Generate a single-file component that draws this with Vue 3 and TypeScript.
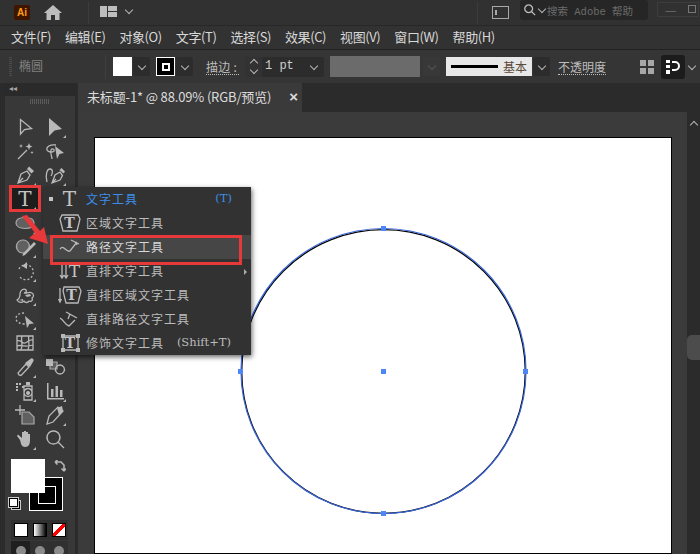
<script setup lang="ts">
type Tool = { f?: string; s?: string; d?: string; t?: string; dash?: boolean; corner?: boolean };

const menus = ["文件(F)", "编辑(E)", "对象(O)", "文字(T)", "选择(S)", "效果(C)", "视图(V)", "窗口(W)", "帮助(H)"];

// 工具列：两栏，文字工具右边那几格被弹出菜单盖住
const tools: Tool[] = [
  { s: "M6.500 3.500V18L10.500 13.500L17.500 12.500Z" },
  { f: "M5 2V20L10.500 14.500L18 13Z", corner: true },
  { s: "M4 19L13 10", f: "M15 3l1 2.500 2.500 1-2.500 1-1 2.500-1-2.500-2.500-1 2.500-1zM7 4l.6 1.400L9 6l-1.400.6L7 8l-.6-1.400L5 6l1.400-.6zM18 11l.5 1 1 .5-1 .5-.5 1-.5-1-1-.5 1-.5z" },
  { s: "M12 5C6 4 2 7 3 10C4 12 8 13 10 11C11 9 8 8 7 10C6 13 8 17 8 19", f: "M11 6L20 13L15.500 14L13 19Z" },
  { s: "M4 19L7 10L13 7L16 11L13 16ZM4 19L9 14", f: "M13 5L15 2.500L20 7L17.500 9.500Z", corner: true },
  { s: "M3 18C1 11 3 5 6 5C9 5 9 9 7 12M8 19L11 11L16 8L18.500 11.500L16 16ZM8 19L12 15", f: "M15.500 6L17.500 4L21 7.500L19.500 9.500Z", corner: true },
  { t: "T", corner: true },
  {},
  { d: "M11 5.500C17 5.500 20 8 20 11C20 14 17 16.500 11 16.500C5 16.500 2 14 2 11C2 8 5 5.500 11 5.500Z", corner: true },
  {},
  { d: "M9 4a6.500 6.500 0 1 1-.1 0z", f: "M20 6L22 8L11 19L8.500 20L9 17.500Z", corner: true },
  {},
  { s: "M5 9A7.500 7.500 0 1 1 6 17", dash: true, f: "M13 2L8 6L13 9Z", corner: true },
  {},
  { s: "M3 16C5 15 6 13 6 10C6 6 10 4 12 6C13 7 12 9 10 9C12 10 15 7 18 9C20 10 20 13 18 14C19 16 18 18 15 17C14 19 11 19 10 17C8 19 5 19 3 16Z", f: "M5 16l4-1 0 2zM11 11l5-1 1 2-4 1z", corner: true },
  {},
  { s: "M10 5C5 5 2 7.500 2 10.500C2 14 6 16 11 16", dash: true, f: "M11 8L20 15.500L15.500 16L13 20Z", corner: true },
  {},
  { s: "M3 4H19V18H3ZM3 9C7 7 8 12 11 11C14 10 15 7 19 8M8 4C6 8 10 12 7 18M15 4C13 8 17 12 14 18M3 14C7 12 10 16 19 13" },
  {},
  { s: "M5 19L4 17L12 8L15 11L7 19.500Z", f: "M11 7L17 2.500C18 1.500 20.500 3.500 19.500 5L16 11Z", corner: true },
  { f: "M2 3H9V10H2Z", d: "M6 6H13V13H6Z", s: "M16 9a4.500 4.500 0 1 1-.1 0z" },
  { f: "M2 3h2v2H2zM5 3h2v2H5zM2 6h2v2H2zM8 6h2v2H8zM2 9h2v2H2zM12 2h4v3h-4zM14 11a2 2 0 1 0 .1 0z", s: "M10 6H18V20H10ZM14 8.500A4 4 0 1 0 14.100 8.500", corner: true },
  { f: "M3 3H4.500V19H3ZM3 18H20V19.500H3ZM7 9H9.500V17H7ZM11.500 6H14V17H11.500ZM16 10H18.500V17H16Z", corner: true },
  { s: "M6 1V11M1 6H11", d: "M8 8H15L20 13V20H8Z" },
  { s: "M3 20L5 12L14 3L19 7L9 18Z", f: "M13 4L18 2L19 7L15 11Z", corner: true },
  { f: "M6 12L3 8L4 6.500L8 10V4H10V9V3H12V9V4H14V10V6H16V12C16 16 15 19 11 19C7 19 7 15 6 12Z", corner: true },
  { s: "M9.500 3A6.500 6.500 0 1 1 9.400 3ZM14 14L20 20" },
];

type MenuRow = { label: string; key?: string; active?: boolean; hover?: boolean; more?: boolean };
const rows: MenuRow[] = [
  { label: "文字工具", key: "(T)", active: true },
  { label: "区域文字工具" },
  { label: "路径文字工具", hover: true },
  { label: "直排文字工具", more: true },
  { label: "直排区域文字工具" },
  { label: "直排路径文字工具" },
  { label: "修饰文字工具", key: "(Shift+T)" },
];
</script>

<template>
  <div class="ai">
    <header class="title">
      <span class="logo">Ai</span>
      <svg class="home" viewBox="0 0 18 15"><path d="M9 0L18 8H15.500V15H11V10H7V15H2.500V8H0Z" /></svg>
      <i class="sep sep-a"></i>
      <svg class="layout" viewBox="0 0 17 11"><path d="M0 0H7V11H0ZM8 0H17V5H8ZM8 6H17V11H8Z" /></svg>
      <i class="chev chev-t"></i>
      <i class="sep sep-b"></i>
      <span class="panel-ico"><b></b></span>
      <div class="search">
        <svg viewBox="0 0 14 14"><path d="M5.500 1A4.500 4.500 0 1 1 5.400 1ZM9 9L13 13" /></svg>
        <i class="chev"></i>
        <span>搜索 Adobe 帮助</span>
      </div>
      <div class="win"><span>—</span><span class="max"></span></div>
    </header>

    <nav class="menubar">
      <span v-for="m in menus" :key="m">{{ m }}</span>
    </nav>

    <section class="control">
      <i class="grip"></i>
      <span class="kind">椭圆</span>
      <i class="ctl-sep"></i>
      <span class="swatch-w"></span>
      <span class="drop"><i class="chev"></i></span>
      <span class="swatch-s"><b></b></span>
      <span class="drop"><i class="chev"></i></span>
      <span class="link stroke-l">描边 :</span>
      <div class="weight">
        <span class="stepper"><i class="chev up"></i><i class="chev"></i></span>
        <span class="val">1 pt</span>
        <span class="drop"><i class="chev"></i></span>
      </div>
      <span class="bar"></span>
      <span class="drop off"><i class="chev"></i></span>
      <div class="profile"><i></i><span>基本</span></div>
      <span class="drop"><i class="chev"></i></span>
      <span class="link opacity">不透明度</span>
      <svg class="arrange" viewBox="0 0 14 14"><path d="M0 0H6V6H0ZM8 0H14V6H8ZM0 8H6V14H0ZM8 8H14V14H8Z" /></svg>
      <span class="snap">
        <svg viewBox="0 0 14 14"><path d="M0 0H4V3H0ZM0 5H4V8H0ZM0 10H4V14H0Z" fill="#fff" /><path d="M6 2H9A3.500 3.500 0 0 1 9 10H6" fill="none" stroke="#fff" stroke-width="2" /></svg>
      </span>
      <i class="chev last"></i>
    </section>

    <div class="body">
      <aside class="tools">
        <div class="tools-head"><span>◂◂</span></div>
        <div class="tools-grip"></div>
        <div class="tool-grid">
          <div v-for="(tool, i) in tools" :key="i" class="tool" :class="{ picked: i === 6 }">
            <svg viewBox="0 0 22 22">
              <path v-if="tool.d" :d="tool.d" class="ico-d" />
              <path v-if="tool.f" :d="tool.f" class="ico-f" />
              <path v-if="tool.s" :d="tool.s" class="ico-s" :stroke-dasharray="tool.dash ? '2 2' : undefined" />
              <text v-if="tool.t" x="11" y="18" class="ico-t">{{ tool.t }}</text>
              <path v-if="tool.corner" d="M22 19V22H19Z" class="ico-f" />
            </svg>
          </div>
        </div>
        <div class="colors">
          <span class="stroke-big"><b></b></span>
          <span class="fill-big"></span>
          <svg class="swap" viewBox="0 0 12 12"><path d="M1 2H7L10 5V11M1 2L3.500 0M1 2L3.500 4.500M10 11L7.500 8.500M10 11L12 8.500" /></svg>
          <span class="def"><b></b></span>
        </div>
        <div class="modes">
          <span class="mode"><i class="m-fill"></i></span>
          <span class="mode"><i class="m-grad"></i></span>
          <span class="mode"><i class="m-none"></i></span>
        </div>
        <div class="draws">
          <span class="draw on"><i></i></span>
          <span class="draw"><i></i></span>
          <span class="draw"><i></i></span>
        </div>
      </aside>

      <main class="doc">
        <div class="tabs">
          <div class="tab">
            <span>未标题-1* @ 88.09% (RGB/预览)</span>
            <em>×</em>
          </div>
        </div>
        <div class="work">
          <div class="canvas">
            <div class="artboard">
              <svg class="shape" viewBox="0 0 576 415">
                <circle cx="288.500" cy="233.500" r="141.800" fill="none" stroke="#000" stroke-width="1.300" />
                <circle cx="288.500" cy="233" r="142.500" fill="none" stroke="#3a66d8" stroke-width="1.200" />
                <rect x="286" y="88" width="5" height="5" fill="#4f86f7" />
                <rect x="143" y="231" width="5" height="5" fill="#4f86f7" />
                <rect x="286" y="231" width="5" height="5" fill="#4f86f7" />
                <rect x="428" y="231" width="5" height="5" fill="#4f86f7" />
                <rect x="286" y="373" width="5" height="5" fill="#4f86f7" />
              </svg>
            </div>
          </div>
          <div class="scroll">
            <i class="chev up"></i>
            <span class="thumb"></span>
          </div>
        </div>
      </main>
    </div>

    <!-- 弹出的文字工具菜单 -->
    <div class="flyout">
      <div v-for="(r, i) in rows" :key="r.label" class="row" :class="{ hover: r.hover, active: r.active }">
        <i class="dot" :class="{ show: r.active }"></i>
        <svg class="row-ico" viewBox="0 0 24 20">
          <template v-if="i === 0"><text x="12" y="17" class="ico-t">T</text></template>
          <template v-else-if="i === 1">
            <path d="M4 2H20L22 6L19 18H5L2 6Z" class="ico-s" />
            <text x="12" y="15" class="ico-t small">T</text>
          </template>
          <template v-else-if="i === 2">
            <path d="M2 12C6 7 8 16 12 14L19 5M13 3L21 7M17 5L19 8" class="ico-s" />
          </template>
          <template v-else-if="i === 3">
            <path d="M4 3V17M2 14L4 17L6 14M8 3V17M6 14L8 17L10 14" class="ico-s" />
            <text x="17" y="16" class="ico-t med">T</text>
          </template>
          <template v-else-if="i === 4">
            <path d="M2 3V17M0.500 14L2 17L3.500 14" class="ico-s" />
            <path d="M6 2H21L23 6L20 18H8L5 6Z" class="ico-s" />
            <text x="14" y="15" class="ico-t small">T</text>
          </template>
          <template v-else-if="i === 5">
            <path d="M2 9C6 11 7 16 11 17L17 11M8 3L19 9M12 5L10 10" class="ico-s" />
          </template>
          <template v-else>
            <path d="M5 3H20V17H5Z" class="ico-s" />
            <path d="M3 1h4v4H3zM18 1h4v4h-4zM3 15h4v4H3zM18 15h4v4h-4z" class="ico-f" />
            <text x="12.500" y="14.500" class="ico-t small">T</text>
          </template>
        </svg>
        <span class="row-label">{{ r.label }}</span>
        <span v-if="r.key" class="row-key">{{ r.key }}</span>
        <i v-if="r.more" class="more"></i>
      </div>
    </div>

    <!-- 教程标注 -->
    <span class="mark mark-tool"></span>
    <span class="mark mark-row"></span>
    <svg class="mark-arrow" viewBox="0 0 30 34"><path d="M1 2L6 1L19 17L23 13L27 30L8 24L14 19Z" /></svg>
  </div>
</template>

<style scoped>
.ai {
  position: relative;
  width: 700px;
  height: 554px;
  overflow: hidden;
  display: flex;
  flex-direction: column;
  background: #323232;
  color: #d6d6d6;
  font-family: "Noto Sans CJK SC", "Liberation Sans", sans-serif;
  font-size: 13px;
}
.chev {
  display: inline-block;
  width: 5px;
  height: 5px;
  border-right: 1.500px solid #b4b4b4;
  border-bottom: 1.500px solid #b4b4b4;
  transform: translateY(-1px) rotate(45deg);
}
.chev.up {
  transform: translateY(1px) rotate(225deg);
}

.title {
  height: 26px;
  flex: none;
  display: flex;
  align-items: center;
  border-bottom: 1px solid #272727;
  box-sizing: border-box;
  background: #313131;
}
.logo {
  width: 16px;
  height: 15px;
  margin-left: 14px;
  background: #3e1600;
  border-radius: 2px;
  color: #ff9c1a;
  font: bold 10px/15px "Liberation Sans", sans-serif;
  text-align: center;
}
.home {
  width: 18px;
  height: 15px;
  margin-left: 14px;
  fill: #bdbdbd;
}
.sep {
  width: 1px;
  height: 22px;
  background: #3c3c3c;
}
.sep-a {
  margin-left: 26px;
}
.layout {
  width: 17px;
  height: 11px;
  margin: 0 0 3px 11px;
  fill: #bdbdbd;
}
.chev-t {
  margin-left: 9px;
  margin-top: -4px;
}
.sep-b {
  margin-left: 345px;
}
.panel-ico {
  width: 15px;
  height: 11px;
  margin-left: 14px;
  border: 1px solid #a8a8a8;
  box-sizing: content-box;
}
.panel-ico b {
  display: block;
  width: 2px;
  height: 5px;
  margin: 3px 0 0 2px;
  border: 1px solid #a8a8a8;
  box-sizing: border-box;
}
.search {
  width: 128px;
  height: 20px;
  margin-left: 11px;
  margin-bottom: 5px;
  padding-left: 4px;
  box-sizing: border-box;
  display: flex;
  align-items: center;
  background: #262626;
  border-radius: 3px;
  color: #6c6c6c;
  font-family: "Liberation Mono", "Noto Sans CJK SC", monospace;
  font-size: 10.500px;
  white-space: nowrap;
}
.search svg {
  width: 12px;
  height: 12px;
  fill: none;
  stroke: #bcbcbc;
  stroke-width: 1.500;
}
.search .chev {
  margin: 0 2px 0 3px;
}
.win {
  margin-left: 9px;
  margin-bottom: 7px;
  height: 13px;
  width: 40px;
  flex: none;
  display: flex;
  border: 1px solid #3d3d3d;
  color: #707070;
  line-height: 13px;
}
.win span {
  padding: 0 7px;
}
.win .max {
  width: 6px;
  height: 6px;
  padding: 0;
  margin-left: 4px;
  margin-top: 2px;
  border: 1px solid #777;
}

.menubar {
  height: 23px;
  flex: none;
  box-sizing: border-box;
  display: flex;
  align-items: center;
  gap: 14px;
  padding: 0 0 3px 11px;
  color: #d8d8d8;
  background: #323232;
  white-space: nowrap;
  letter-spacing: -0.400px;
}

.control {
  height: 34px;
  flex: none;
  box-sizing: border-box;
  border-top: 1px solid #222;
  display: flex;
  align-items: center;
  padding-left: 9px;
  background: #353535;
  white-space: nowrap;
  font-size: 12px;
}
.grip {
  width: 3px;
  height: 20px;
  background: repeating-linear-gradient(#4c4c4c 0 1px, transparent 1px 2px);
}
.kind {
  margin-left: 7px;
  margin-bottom: 2px;
  color: #808080;
}
.ctl-sep {
  width: 1px;
  height: 24px;
  margin-left: 62px;
  background: #3f3f3f;
}
.swatch-w {
  width: 19px;
  height: 19px;
  margin-left: 7px;
  background: #fff;
}
.drop {
  width: 17px;
  height: 19px;
  margin-left: 1px;
  display: inline-flex;
  align-items: center;
  justify-content: center;
  background: #2c2c2c;
  border-radius: 2px;
}
.drop.off {
  background: #383838;
  margin-left: 3px;
}
.drop.off .chev {
  border-color: #555;
}
.swatch-s {
  width: 19px;
  height: 19px;
  margin-left: 6px;
  box-sizing: border-box;
  border: 1px solid #fff;
  background: #000;
  display: flex;
  align-items: center;
  justify-content: center;
}
.swatch-s b {
  width: 4px;
  height: 4px;
  border: 2px solid #fff;
}
.link {
  color: #bdbdbd;
  border-bottom: 1px dotted #bdbdbd;
  line-height: 15px;
}
.stroke-l {
  margin-left: 13px;
  width: 33px;
  letter-spacing: 0.300px;
}
.weight {
  width: 79px;
  height: 20px;
  margin-left: 6px;
  display: flex;
  background: #2c2c2c;
  border-radius: 2px;
}
.stepper {
  width: 17px;
  display: flex;
  flex-direction: column;
  align-items: center;
  justify-content: center;
  gap: 3px;
  background: #323232;
}
.val {
  width: 43px;
  padding-left: 3px;
  box-sizing: border-box;
  font: 12px/18px "Liberation Mono", monospace;
  color: #cfcfcf;
}
.weight .drop {
  height: 20px;
  margin: 0;
}
.bar {
  width: 90px;
  height: 21px;
  margin-left: 6px;
  background: #6b6b6b;
}
.profile {
  width: 86px;
  height: 19px;
  margin-left: 6px;
  box-sizing: border-box;
  display: flex;
  align-items: center;
  padding-left: 5px;
  background: #e8e8e8;
  color: #5a4a3a;
}
.profile i {
  width: 47px;
  height: 3px;
  margin-right: 5px;
  background: #000;
}
.opacity {
  margin-left: 8px;
}
.arrange {
  width: 14px;
  height: 14px;
  margin-left: 34px;
  fill: #a8a8a8;
}
.snap {
  width: 24px;
  height: 24px;
  margin-left: 7px;
  display: flex;
  align-items: center;
  justify-content: center;
  background: #1c1c1c;
  border-radius: 3px;
}
.snap svg {
  width: 14px;
  height: 14px;
}
.last {
  margin-left: 4px;
}

.body {
  flex: 1;
  min-height: 0;
  display: flex;
  background: #2b2b2b;
}
.tools {
  width: 70px;
  flex: none;
  background: #383838;
  border-left: 1px solid #2a2a2a;
  border-right: 1px solid #2a2a2a;
  margin-right: 2px;
  position: relative;
  margin-left: 4px;
}
.tools-head {
  height: 13px;
  background: #2a2a2a;
  color: #a5a5a5;
  font: 8px/12px "DejaVu Sans", sans-serif;
  padding-left: 4px;
}
.tools-grip {
  height: 19px;
  background: repeating-linear-gradient(90deg, #5a5a5a 0 1px, transparent 1px 2px) no-repeat 25px 3px / 19px 5px;
}
.tool-grid {
  display: grid;
  grid-template-columns: 30px 30px;
  grid-auto-rows: 24px;
  padding-left: 5px;
}
.tool {
  display: flex;
  align-items: center;
  justify-content: center;
}
.tool svg {
  width: 22px;
  height: 22px;
  overflow: visible;
}
.tool.picked {
  background: #1d1d1d;
}
.ico-f {
  fill: #b9b9b9;
}
.ico-d {
  fill: #606060;
  stroke: #a8a8a8;
  stroke-width: 1.200;
}
.ico-s {
  fill: none;
  stroke: #b9b9b9;
  stroke-width: 1.300;
}
.ico-t {
  fill: #c4c4c4;
  font: 20px "DejaVu Serif", serif;
  text-anchor: middle;
}
.ico-t.med {
  font-size: 17px;
}
.ico-t.small {
  font-size: 14px;
  font-weight: bold;
}
.colors {
  position: relative;
  height: 69px;
}
.fill-big {
  position: absolute;
  left: 6px;
  top: 8px;
  width: 34px;
  height: 34px;
  background: #fff;
}
.stroke-big {
  position: absolute;
  left: 24px;
  top: 26px;
  width: 34px;
  height: 34px;
  box-sizing: border-box;
  background: #000;
  border: 1px solid #fff;
}
.stroke-big b {
  display: block;
  width: 16px;
  height: 16px;
  margin: 8px;
  border: 1px solid #fff;
}
.swap {
  position: absolute;
  left: 49px;
  top: 9px;
  width: 12px;
  height: 12px;
  fill: none;
  stroke: #b9b9b9;
  stroke-width: 1.500;
}
.def {
  position: absolute;
  left: 6px;
  top: 49px;
  width: 8px;
  height: 8px;
  border: 1px solid #ccc;
  background: #000;
}
.def b {
  display: block;
  width: 7px;
  height: 7px;
  margin: -3px 0 0 -3px;
  background: #fff;
  border: 1px solid #000;
  outline: 1px solid #ccc;
}
.modes,
.draws {
  display: flex;
  margin-left: 6px;
  width: 57px;
  background: #303030;
}
.modes {
  height: 20px;
}
.draws {
  height: 14px;
  margin-top: 1px;
}
.mode,
.draw {
  flex: 1;
  display: flex;
  align-items: center;
  justify-content: center;
}
.mode i {
  width: 12px;
  height: 12px;
  border: 1px solid #000;
}
.m-fill {
  background: #fff;
}
.m-grad {
  background: linear-gradient(90deg, #fff, #000);
}
.m-none {
  background: linear-gradient(135deg, #fff 40%, #f00 40% 60%, #fff 60%);
}
.draw.on {
  background: #1f1f1f;
}
.draw i {
  width: 10px;
  height: 10px;
  margin-top: 6px;
  border-radius: 50%;
  background: #8a8a8a;
}

.doc {
  flex: 1;
  min-width: 0;
  display: flex;
  flex-direction: column;
}
.tabs {
  height: 29px;
  flex: none;
  background: #2b2b2b;
}
.tab {
  width: 224px;
  height: 29px;
  box-sizing: border-box;
  padding: 0 0 2px 9px;
  display: flex;
  align-items: center;
  background: #3a3a3a;
  color: #dcdcdc;
  white-space: pre;
  letter-spacing: -0.150px;
}
.tab em {
  margin-left: 18px;
  font: bold 15px "Liberation Sans", sans-serif;
}
.work {
  flex: 1;
  min-height: 0;
  display: flex;
}
.canvas {
  flex: 1;
  min-width: 0;
  overflow: hidden;
  background: #3b3b3b;
  padding: 26px 0 0 17px;
}
.artboard {
  width: 576px;
  height: 415px;
  background: #fff;
  outline: 1px solid #000;
  position: relative;
}
.shape {
  position: absolute;
  inset: 0;
  width: 576px;
  height: 415px;
}
.scroll {
  width: 13px;
  flex: none;
  background: #2b2b2b;
  display: flex;
  flex-direction: column;
  align-items: center;
  padding-top: 9px;
}
.thumb {
  width: 13px;
  height: 25px;
  margin-top: 208px;
  background: #4c4c4c;
  border-radius: 5px 0 0 5px;
}

.flyout {
  position: absolute;
  left: 43px;
  top: 187px;
  width: 208px;
  height: 168px;
  background: #323232;
  box-shadow: 1px 2px 5px rgba(0, 0, 0, 0.6);
  font-size: 12px;
  letter-spacing: 1px;
  white-space: nowrap;
}
.row {
  height: 24px;
  display: flex;
  align-items: center;
  position: relative;
  color: #bcbcbc;
}
.row.hover {
  background: #464646;
  color: #d8d8d8;
}
.row.active {
  color: #3d8eea;
}
.dot {
  width: 4px;
  height: 4px;
  margin-left: 6px;
  flex: none;
}
.dot.show {
  background: #c4c4c4;
}
.row-ico {
  width: 24px;
  height: 20px;
  margin-left: 5px;
  flex: none;
  overflow: visible;
}
.row-label {
  margin-left: 4px;
  margin-bottom: 2px;
}
.row-key {
  margin-left: auto;
  margin-bottom: 2px;
  padding-right: 19px;
  font-family: "DejaVu Serif", serif;
  font-size: 11.500px;
  letter-spacing: 0;
}
.row:last-child .row-key {
  padding-right: 20px;
  color: #bcbcbc;
}
.more {
  position: absolute;
  right: 4px;
  top: 10px;
  border-left: 3px solid #aaa;
  border-top: 3px solid transparent;
  border-bottom: 3px solid transparent;
}
.mark {
  position: absolute;
  box-sizing: border-box;
  border: 3px solid #e63a3a;
}
.mark-tool {
  left: 9px;
  top: 185px;
  width: 32px;
  height: 27px;
}
.mark-row {
  left: 50px;
  top: 235px;
  width: 192px;
  height: 30px;
}
.mark-arrow {
  position: absolute;
  left: 21px;
  top: 214px;
  width: 30px;
  height: 34px;
  fill: #e8383a;
}
</style>

<style>
html,
body {
  margin: 0;
  background: #323232;
}
</style>
